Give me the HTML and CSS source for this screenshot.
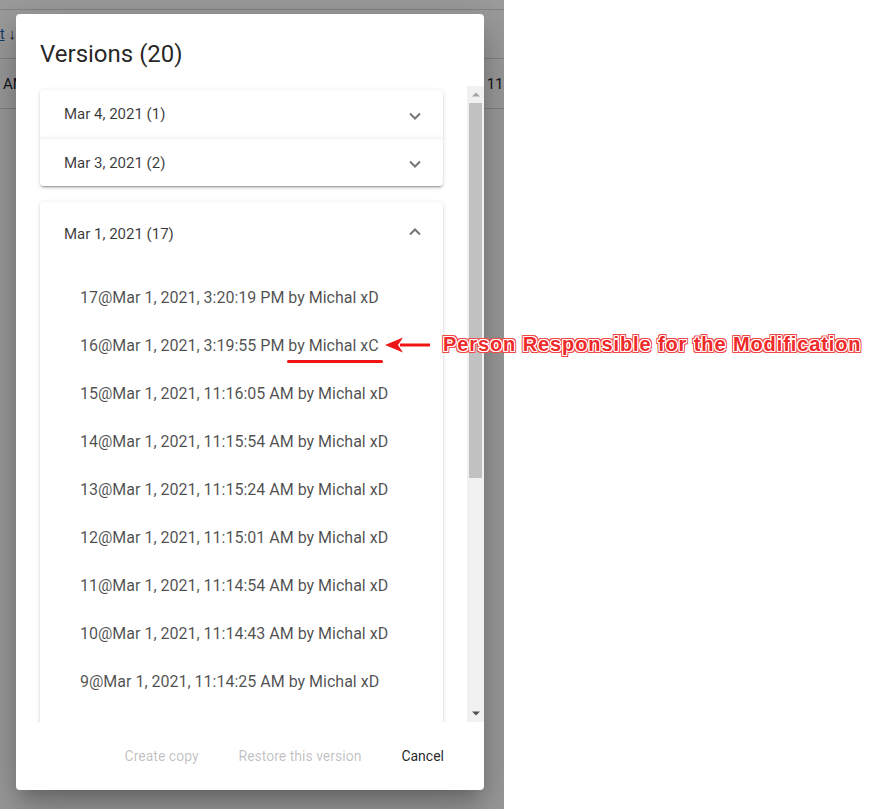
FILE: index.html
```html
<!DOCTYPE html>
<html lang="en">
<head>
    <meta charset="UTF-8">
    <meta name="viewport" content="width=device-width, initial-scale=1.0">
    <title>Versions</title>
    <link rel="stylesheet" href="styles.css">
</head>
<body>
    <div class="stage">
        <!-- page underneath the dialog -->
        <div class="app">
            <div class="app-toolbar">
                <span class="sort-link">t</span>
                <span class="sort-arrow">&#8595;</span>
            </div>
            <div class="app-row">
                <span class="cell-left">AM</span>
                <span class="cell-right">11 A</span>
            </div>
        </div>

        <div class="backdrop">
            <div class="dialog">
                <h2 class="dialog-title">Versions (20)</h2>

                <div class="dialog-body">
                    <div class="dialog-content">
                        <div class="panel panel-top">
                            <div class="panel-header">
                                <span>Mar 4, 2021 (1)</span>
                                <svg class="chevron" width="12" height="8" viewBox="0 0 12 8"><path d="M1 1.5l5 5 5-5" fill="none" stroke="#757575" stroke-width="2"/></svg>
                            </div>
                        </div>
                        <div class="panel panel-bottom">
                            <div class="panel-header">
                                <span>Mar 3, 2021 (2)</span>
                                <svg class="chevron" width="12" height="8" viewBox="0 0 12 8"><path d="M1 1.5l5 5 5-5" fill="none" stroke="#757575" stroke-width="2"/></svg>
                            </div>
                        </div>
                        <div class="panel panel-open">
                            <div class="panel-header panel-header-open">
                                <span>Mar 1, 2021 (17)</span>
                                <svg class="chevron chevron-up" width="12" height="8" viewBox="0 0 12 8"><path d="M1 6.5l5-5 5 5" fill="none" stroke="#757575" stroke-width="2"/></svg>
                            </div>
                            <ul class="version-list">
                                <li>17@Mar 1, 2021, 3:20:19 PM by Michal xD</li>
                                <li>16@Mar 1, 2021, 3:19:55 PM by Michal xC</li>
                                <li>15@Mar 1, 2021, 11:16:05 AM by Michal xD</li>
                                <li>14@Mar 1, 2021, 11:15:54 AM by Michal xD</li>
                                <li>13@Mar 1, 2021, 11:15:24 AM by Michal xD</li>
                                <li>12@Mar 1, 2021, 11:15:01 AM by Michal xD</li>
                                <li>11@Mar 1, 2021, 11:14:54 AM by Michal xD</li>
                                <li>10@Mar 1, 2021, 11:14:43 AM by Michal xD</li>
                                <li>9@Mar 1, 2021, 11:14:25 AM by Michal xD</li>
                                <li>8@Mar 1, 2021, 11:14:02 AM by Michal xD</li>
                            </ul>
                        </div>
                    </div>

                    <!-- classic scrollbar -->
                    <div class="scrollbar">
                        <div class="scroll-btn">
                            <svg width="8" height="5" viewBox="0 0 8 5"><path d="M0 4.5L4 0.5 8 4.5z" fill="#a3a3a3"/></svg>
                        </div>
                        <div class="scroll-track">
                            <div class="scroll-thumb"></div>
                        </div>
                        <div class="scroll-btn">
                            <svg width="8" height="5" viewBox="0 0 8 5"><path d="M0 0.5L4 4.5 8 0.5z" fill="#505050"/></svg>
                        </div>
                    </div>
                </div>

                <div class="dialog-actions">
                    <button class="btn" disabled>Create copy</button>
                    <button class="btn" disabled>Restore this version</button>
                    <button class="btn">Cancel</button>
                </div>
            </div>
        </div>
    </div>

    <div class="blank"></div>

    <!-- annotation drawn on top of the screenshot -->
    <div class="mark-underline"></div>
    <svg class="mark-arrow" width="50" height="18" viewBox="0 0 50 18">
        <path d="M17 9H47" stroke="#f01414" stroke-width="3"/>
        <path d="M2 9L20 1.5 15 9 20 16.5z" fill="#f01414"/>
    </svg>
    <div class="mark-note">Person Responsible for the Modification</div>
</body>
</html>
```

FILE: styles.css
```css
body {
    margin: 0;
    width: 874px;
    height: 809px;
    display: flex;
    position: relative;
    overflow: hidden;
    font-family: 'Roboto', 'Liberation Sans', sans-serif;
    background-color: #ffffff;
}
.stage {
    position: relative;
    width: 504px;
    height: 809px;
    overflow: hidden;
    background-color: #ffffff;
}
.blank {
    flex: 1;
}

/* page under the overlay */
.app {
    font-size: 14px;
    color: #1c2636;
}
.app-toolbar {
    height: 50px;
    margin-top: 9px;
    border-top: 1px solid #d8d8d8;
    border-bottom: 1px solid #d8d8d8;
    display: flex;
    align-items: center;
    gap: 4px;
    box-sizing: border-box;
}
.sort-link {
    color: #1a5fb4;
    text-decoration: underline;
}
.sort-arrow {
    font-size: 15px;
}
.app-row {
    height: 49px;
    border-bottom: 1px solid #d8d8d8;
    display: flex;
    align-items: center;
    justify-content: space-between;
    padding: 0 0 0 3px;
    font-size: 15px;
}
.cell-right {
    margin-right: -13px;
}

.backdrop {
    position: absolute;
    inset: 0;
    background-color: rgba(0, 0, 0, 0.39);
    padding: 14px 0 0 16px;
}

/* dialog */
.dialog {
    width: 468px;
    height: 776px;
    background-color: #ffffff;
    border-radius: 4px;
    box-sizing: border-box;
    padding-top: 24px;
    display: flex;
    flex-direction: column;
    box-shadow: 0 11px 15px -7px rgba(0, 0, 0, 0.2), 0 24px 38px 3px rgba(0, 0, 0, 0.14), 0 9px 46px 8px rgba(0, 0, 0, 0.12);
}
.dialog-title {
    margin: 0 24px 16px;
    font-size: 24px;
    font-weight: 400;
    line-height: 32px;
    color: rgba(0, 0, 0, 0.87);
}
.dialog-body {
    height: 636px;
    display: flex;
}
.dialog-content {
    flex: 1;
    overflow: hidden;
    padding: 4px 24px 0;
}

.scrollbar {
    width: 17px;
    display: flex;
    flex-direction: column;
    background-color: #f1f1f1;
}
.scroll-btn {
    height: 17px;
    display: flex;
    align-items: center;
    justify-content: center;
}
.scroll-track {
    flex: 1;
    padding: 0 2px 0 2px;
}
.scroll-thumb {
    height: 375px;
    background-color: #c1c1c1;
}

/* expansion panels */
.panel {
    background-color: #ffffff;
    color: rgba(0, 0, 0, 0.78);
    box-shadow: 0 3px 1px -2px rgba(0, 0, 0, 0.2), 0 2px 2px 0 rgba(0, 0, 0, 0.14), 0 1px 5px 0 rgba(0, 0, 0, 0.12);
}
.panel-top {
    border-radius: 4px 4px 0 0;
}
.panel-bottom {
    border-radius: 0 0 4px 4px;
    border-top: 1px solid #f3f3f3;
}
.panel-open {
    border-radius: 4px;
    margin-top: 16px;
    padding-bottom: 16px;
}
.panel-header {
    height: 48px;
    box-sizing: border-box;
    padding: 0 22px 0 24px;
    display: flex;
    align-items: center;
    justify-content: space-between;
    font-size: 15px;
}
.panel-bottom .panel-header {
    height: 47px;
}
.panel-header-open {
    height: 64px;
}
.chevron {
    margin-top: 3px;
}
.chevron-up {
    margin-top: -5px;
}
.version-list {
    list-style: none;
    margin: 0;
    padding: 8px 24px 0;
}
.version-list li {
    height: 48px;
    line-height: 48px;
    padding: 0 16px;
    font-size: 16px;
    color: rgba(0, 0, 0, 0.7);
    white-space: nowrap;
}

.dialog-actions {
    flex: 1;
    display: flex;
    align-items: center;
    justify-content: flex-end;
    gap: 8px;
    padding: 0 24px 0 0;
}
.btn {
    font-family: 'Roboto', 'Liberation Sans', sans-serif;
    font-size: 14px;
    font-weight: 400;
    height: 36px;
    padding: 0 16px;
    border: none;
    background: none;
    color: rgba(0, 0, 0, 0.87);
    cursor: pointer;
}
.btn:disabled {
    color: rgba(0, 0, 0, 0.26);
    cursor: default;
}

/* annotation */
.mark-underline {
    position: absolute;
    left: 287px;
    top: 360px;
    width: 96px;
    height: 3px;
    border-radius: 2px;
    background-color: #f01414;
}
.mark-arrow {
    position: absolute;
    left: 383px;
    top: 336px;
}
.mark-note {
    position: absolute;
    left: 443px;
    top: 332px;
    font-family: 'Liberation Sans', Arial, sans-serif;
    font-size: 20px;
    font-weight: 700;
    line-height: 24px;
    letter-spacing: 0.9px;
    white-space: nowrap;
    color: #ef2a2a;
    text-shadow:
        1px 0 0 #fff, -1px 0 0 #fff, 0 1px 0 #fff, 0 -1px 0 #fff,
        1px 1px 0 #fff, -1px -1px 0 #fff, 1px -1px 0 #fff, -1px 1px 0 #fff,
        2px 0 0 #f04848, -2px 0 0 #f04848, 0 2px 0 #f04848, 0 -2px 0 #f04848,
        2px 2px 0 #f04848, -2px -2px 0 #f04848, 2px -2px 0 #f04848, -2px 2px 0 #f04848;
}
```
